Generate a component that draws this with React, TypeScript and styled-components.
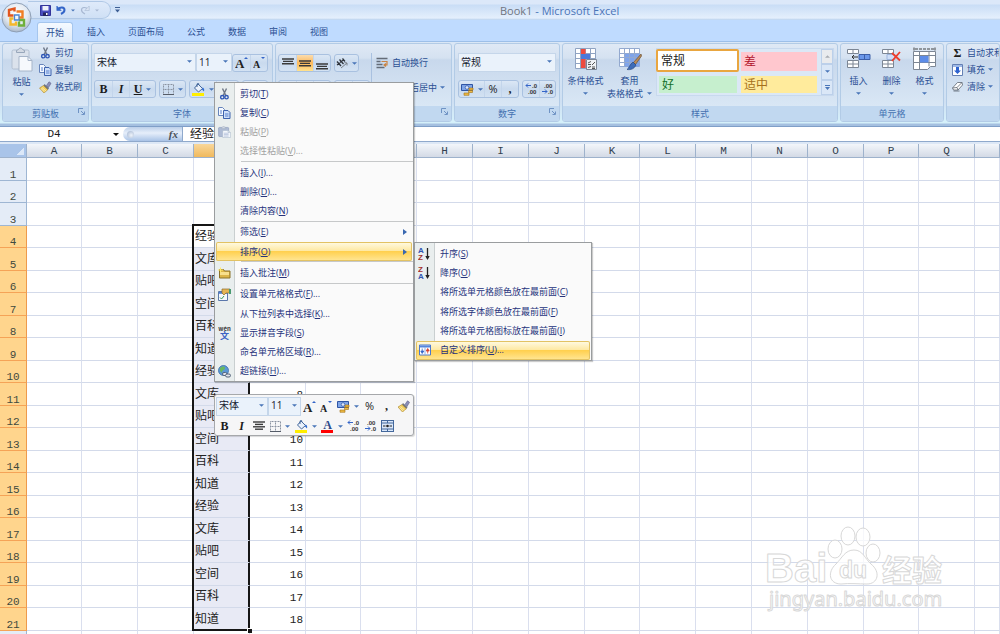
import React from "react";
import styled, { createGlobalStyle, css } from "styled-components";

const UI_FONT = `"Open Sans", "Noto Sans CJK SC", sans-serif`;
const CELL_FONT = `"Liberation Mono", "Noto Sans CJK SC", monospace`;
const INK = "#2b4f93";

const GlobalStyle = createGlobalStyle`
  *, *::before, *::after { box-sizing: border-box; }
  body { margin: 0; overflow: hidden; background: #fff; }
  button, input, select { font: inherit; color: inherit; margin: 0; padding: 0; border: 0; background: none; border-radius: 0; outline: none; }
  button { cursor: pointer; }
  svg { display: block; flex: none; }
`;

const Window = styled.div`
  position: relative;
  display: flex;
  flex-direction: column;
  height: 100vh;
  overflow: hidden;
  font: 9px/12px ${UI_FONT};
  color: ${INK};
`;

/* ---------- Title bar and tabs ---------- */

const TitleBar = styled.header`
  display: flex;
  align-items: center;
  height: 20px;
  padding-left: 28px;
  background: linear-gradient(#dce8f9 0, #dce8f9 4px, #c9ddf6 5px, #e4effc 18px, #b9d2ee 20px);
`;

const QuickAccess = styled.div`
  display: flex;
  align-items: center;
  gap: 5px;
  width: 83px;
  height: 18px;
  padding-left: 12px;
  border: 1px solid #b0c8e6;
  border-left: 0;
  border-radius: 0 9px 9px 0;
  background: linear-gradient(#dfeafa, #cfe0f5);
`;

const QuickMore = styled.button`
  display: flex;
  margin-left: 4px;
`;

const WindowTitle = styled.h1`
  flex: 1;
  margin: 0;
  padding: 2px 0 0 380px;
  font-size: 11px;
  font-weight: 400;
  line-height: 14px;
  color: #4a74b8;
  white-space: nowrap;

  span { color: #70757f; }
`;

const OfficeButton = styled.button`
  position: absolute;
  left: 1px;
  top: 2px;
  width: 31px;
  height: 31px;
`;

const TabStrip = styled.nav`
  display: flex;
  gap: 5px;
  height: 22px;
  padding: 2px 0 0 37px;
  background: #bfdbff;
  border-bottom: 1px solid #9dbfe8;
`;

const Tab = styled.button<{ $active?: boolean }>`
  height: 20px;
  padding: 0 9px;
  white-space: nowrap;
  ${(p) =>
    p.$active &&
    css`
      border: 1px solid #a5c6ee;
      border-bottom: 0;
      border-radius: 3px 3px 0 0;
      padding: 0 8px;
      background: linear-gradient(#f4f9ff, #e1ecf9);
    `}
`;

/* ---------- Ribbon ---------- */

const Ribbon = styled.section`
  display: flex;
  gap: 2px;
  height: 85px;
  padding: 1px 0 4px 2px;
  background: linear-gradient(#dae7f6, #cfe0f3 60px, #d5f0fa 79px, #d5f0fa 81px, #a5c0e0 82px);
  border-bottom: 1px solid #7f9fc8;
`;

const GroupBox = styled.section<{ $width?: number }>`
  display: flex;
  flex-direction: column;
  flex: ${(p) => (p.$width ? `0 0 ${p.$width}px` : "1 0 54px")};
  overflow: hidden;
  border: 1px solid #b2cbe6;
  border-radius: 3px;
  background: linear-gradient(#dfe9f5, #d5e2f1 14px, #c8d8ec 16px, #d9e7f5 62px);
`;

const GroupBody = styled.div<{ $gap?: number; $pad?: string }>`
  display: flex;
  flex: 1;
  gap: ${(p) => p.$gap ?? 0}px;
  padding: ${(p) => p.$pad ?? "0 2px"};
`;

const GroupLabel = styled.footer`
  position: relative;
  display: flex;
  align-items: center;
  justify-content: center;
  height: 15px;
  background: #c1d8f0;
  color: #4471b0;
`;

const Launcher = styled.button`
  position: absolute;
  right: 3px;
  top: 2px;
`;

const Stack = styled.div<{ $gap?: number }>`
  display: flex;
  flex-direction: column;
  gap: ${(p) => p.$gap ?? 0}px;
`;

const AlignStack = styled(Stack)`
  padding-top: 10px;
`;

const Line = styled.div<{ $gap?: number; $height?: number }>`
  display: flex;
  align-items: center;
  gap: ${(p) => p.$gap ?? 0}px;
  height: ${(p) => p.$height ?? 18}px;
`;

const BigButton = styled.button<{ $width: number }>`
  display: flex;
  flex-direction: column;
  align-items: center;
  width: ${(p) => p.$width}px;
  padding-top: 3px;
  line-height: 13px;
  white-space: nowrap;

  svg:first-child { margin-bottom: 3px; }
`;

const ArrowSlot = styled.span`
  display: flex;
  align-items: center;
  gap: 4px;
  height: 13px;

  && svg { margin: 0; }
`;

const SmallButton = styled.button`
  display: flex;
  align-items: center;
  gap: 3px;
  height: 17px;
  white-space: nowrap;

  > :first-child { width: 13px; }
`;

const ButtonSet = styled.div`
  display: flex;
  height: 18px;
  border: 1px solid #a9c1e0;
  border-radius: 3px;
  background: linear-gradient(#dbe7f5, #c9daee 8px, #d3e2f3);
`;

const ToolButton = styled.button<{ $width?: number; $on?: boolean }>`
  display: flex;
  align-items: center;
  justify-content: center;
  gap: 4px;
  width: ${(p) => p.$width ?? 17}px;
  color: #1c1c1c;
  font-size: 11px;
  background: ${(p) => (p.$on ? "linear-gradient(#fbdcae, #fdb95a 8px, #ffe28f)" : "none")};

  & + & { border-left: 1px solid #c3d5eb; }
`;

const Glyph = styled.span<{ $italic?: boolean; $underline?: boolean }>`
  font-family: "Liberation Serif", serif;
  font-size: 12px;
  font-weight: 700;
  font-style: ${(p) => (p.$italic ? "italic" : "normal")};
  text-decoration: ${(p) => (p.$underline ? "underline" : "none")};
  color: #1c1c1c;
`;

const Rule = styled.span`
  align-self: stretch;
  width: 1px;
  margin: 9px 4px 8px 1px;
  background: #a9c1e0;
`;

const Field = styled.label<{ $width: number; $height?: number }>`
  display: flex;
  align-items: center;
  width: ${(p) => p.$width}px;
  height: ${(p) => p.$height ?? 19}px;
  padding: 0 3px 2px 2px;
  border: 1px solid #c5d6ea;
  background: #eaf2fb;
  color: #16202e;
  font-size: 10px;

  select { flex: 1; min-width: 0; appearance: none; }
  svg { pointer-events: none; }
`;

const Gallery = styled.div`
  display: grid;
  grid-template-columns: 82px 80px 14px;
  grid-template-rows: 24px 22px;
  margin: 4px 0 0 3px;
  height: 48px;
  border: 1px solid #c8d9ee;
  background: #dbe8f6;
`;

const Swatch = styled.button<{ $bg: string; $fg: string; $picked?: boolean }>`
  margin: ${(p) => (p.$picked ? "0 0 1px -1px" : "3px 2px 2px 2px")};
  padding-left: ${(p) => (p.$picked ? 3 : 3)}px;
  border: ${(p) => (p.$picked ? "2px solid #e9a640" : "0")};
  border-radius: ${(p) => (p.$picked ? 2 : 0)}px;
  background: ${(p) => p.$bg};
  color: ${(p) => p.$fg};
  font-size: 12px;
  line-height: 16px;
  text-align: left;
`;

const GalleryScroll = styled.div`
  display: grid;
  grid-column: 3;
  grid-row: 1 / 3;
  grid-template-rows: repeat(3, 1fr);
  margin-left: 2px;

  button { display: flex; align-items: center; justify-content: center; border: 1px solid #bcd0ea; background: #dae7f7; }
  button:first-child { background: #e9ebee; }
`;

/* ---------- Formula bar ---------- */

const FormulaBar = styled.div`
  display: flex;
  align-items: center;
  height: 15px;
  background: #fff;
  border-bottom: 1px solid #8fa9cc;
  font: 12px/14px ${CELL_FONT};
  color: #1a1a1a;
`;

const NameBox = styled.input`
  width: 108px;
  font-size: 11px;
  text-align: center;
`;

const NameArrow = styled.button`
  display: flex;
  justify-content: center;
  width: 15px;
`;

const FxPill = styled.div`
  display: flex;
  align-items: center;
  justify-content: space-between;
  width: 60px;
  height: 14px;
  padding: 0 4px;
  border-right: 1px solid #8fa9cc;
  border-radius: 7px 0 0 7px;
  background: linear-gradient(#bcd0ea, #e6eefa 6px, #a9c3e6);
`;

const Knob = styled.span`
  width: 7px;
  height: 7px;
  border-radius: 50%;
  background: radial-gradient(circle at 60% 60%, #eef3fa, #9fb2cf);
`;

const FxButton = styled.button`
  font: italic 700 11px/12px "Liberation Serif", serif;
  color: #4a505a;
`;

const FormulaInput = styled.input`
  flex: 1;
  min-width: 0;
  padding: 1px 0 0 7px;
`;

/* ---------- Grid ---------- */

const SheetArea = styled.main`
  flex: 1;
  min-height: 0;
  overflow: hidden;
  padding-top: 2px;
  background: linear-gradient(#dde8f6 2px, #fff 2px);
`;

const Sheet = styled.table`
  width: 100%;
  table-layout: fixed;
  border-collapse: separate;
  border-spacing: 0;
  font: 12px/16px ${CELL_FONT};
  color: #222;
`;

const ColumnHead = styled.th<{ $on?: boolean }>`
  height: 14px;
  padding: 1px 0 0;
  border-right: 1px solid #9eb2cc;
  border-bottom: 1px solid #9eb2cc;
  background: ${(p) => (p.$on ? "linear-gradient(#f9d79a, #f0b95d)" : "linear-gradient(#f3f6fa, #d3dae6)")};
  font-size: 11px;
  font-weight: 400;
  line-height: 12px;
  color: #333f4f;
`;

const Corner = styled.td`
  padding: 0;
  border-right: 1px solid #9eb2cc;
  border-bottom: 1px solid #9eb2cc;
  background: linear-gradient(135deg, transparent 50%, #dce8f8 50%) 16px 4px / 8px 7px no-repeat #a9c4e9;
`;

const SheetRow = styled.tr<{ $tall: boolean }>`
  height: ${(p) => (p.$tall ? 23 : 22)}px;
`;

const RowHead = styled.th<{ $on: boolean }>`
  padding: 0;
  border-right: 1px solid ${(p) => (p.$on ? "#ee9a4c" : "#9eb6d3")};
  border-bottom: 1px solid ${(p) => (p.$on ? "#f5a357" : "#9eb6d3")};
  background: ${(p) => (p.$on ? "#ffd58d" : "#e4ecf7")};
  font-weight: 400;
  font-size: 11px;
  line-height: 10px;
  vertical-align: bottom;
  color: #3f4a3e;
`;

const Cell = styled.td<{ $num?: boolean }>`
  padding: ${(p) => (p.$num ? "2px 2px 0" : "1px 2px 0")};
  border-right: 1px solid #dadfee;
  border-bottom: 1px solid #d3daea;
  text-align: ${(p) => (p.$num ? "right" : "left")};
  font-size: ${(p) => (p.$num ? 11 : 12)}px;
  white-space: nowrap;
`;

const PickedCell = styled(Cell)<{ $first: boolean; $last: boolean }>`
  position: relative;
  padding-left: 1px;
  background: ${(p) => (p.$first ? "#fff" : "#e8eaf5")};
  box-shadow: -2px 0 #161616, inset -1px 0 #161616
    ${(p) => p.$first && ", 0 -2px #161616, -2px -2px #161616"}
    ${(p) => p.$last && ", inset 0 -1px #161616"};
  border-right-color: #161616;
  ${(p) =>
    p.$last &&
    css`
      border-bottom-color: #161616;
      &::after {
        content: "";
        position: absolute;
        right: -3px;
        bottom: -3px;
        width: 5px;
        height: 5px;
        border: solid #fff;
        border-width: 1px 0 0 1px;
        background: #161616;
      }
    `}
`;

/* ---------- Menus ---------- */

const MenuPanel = styled.div<{ $x: number; $y: number; $w: number; $h: number }>`
  position: absolute;
  left: ${(p) => p.$x}px;
  top: ${(p) => p.$y}px;
  width: ${(p) => p.$w}px;
  height: ${(p) => p.$h}px;
  display: flex;
  flex-direction: column;
  padding-top: 1px;
  border: 1px solid #9a9d9f;
  background: linear-gradient(90deg, #e9eeee 19px, #c9cfd0 19px, #c9cfd0 20px, #fafafa 20px);
  box-shadow: 1px 1px 1px rgba(0, 0, 0, 0.2);
`;

const MenuItem = styled.button<{ $hot?: boolean }>`
  display: flex;
  flex: 1;
  align-items: center;
  min-height: 0;
  padding: 0 6px 0 0;
  text-align: left;
  white-space: nowrap;
  color: #26337c;

  &:disabled { color: #a2a2a2; }
  ${(p) =>
    p.$hot &&
    css`
      margin: 0 1px;
      padding-right: 5px;
      border-radius: 2px;
      box-shadow: inset 0 0 0 1px #e2c263;
      background: linear-gradient(#fffbe6, #fee9a4 45%, #ffd04f 50%, #ffe797);
    `}
`;

const MenuIcon = styled.span<{ $hot?: boolean }>`
  display: flex;
  justify-content: center;
  width: ${(p) => (p.$hot ? 17 : 18)}px;
  margin-right: 7px;
`;

const MenuText = styled.span`
  flex: 1;
`;

const MenuRule = styled.hr`
  flex: none;
  height: 2px;
  width: calc(100% - 26px);
  margin: 0 0 0 26px;
  border: 0;
  border-top: 1px solid #c6c8c9;
`;

const MiniBar = styled.div`
  position: absolute;
  left: 214px;
  top: 394px;
  width: 200px;
  height: 42px;
  padding: 1px;
  border: 1px solid #a6a8ab;
  border-radius: 3px;
  background: #f6f6f7;
  box-shadow: 1px 1px 1px rgba(0, 0, 0, 0.15);
`;

const MiniButton = styled(ToolButton)`
  height: 18px;
  & + & { border-left: 0; }
`;

const Watermark = styled.svg`
  position: absolute;
  right: 50px;
  bottom: 16px;
  pointer-events: none;
`;

/* ---------- Icons ---------- */

const Arrow = ({ color = "#4a76b8", size = 5 }: { color?: string; size?: number }) => (
  <svg width={size} height={3} viewBox="0 0 6 3"><path d="M0 0h6L3 3z" fill={color} /></svg>
);

const LauncherIcon = () => (
  <svg width="7" height="7" viewBox="0 0 7 7" fill="none" stroke="#6f93c4">
    <path d="M.5 5V.5H5" /><path d="M3 3l3 3M6.500 3.500v3h-3" />
  </svg>
);

const OfficeIcon = () => (
  <svg width="31" height="31" viewBox="0 0 31 31">
    <defs>
      <radialGradient id="orb" cx=".5" cy=".35" r=".65">
        <stop offset="0" stopColor="#fff" /><stop offset=".6" stopColor="#e3e9f1" /><stop offset="1" stopColor="#a9b8ca" />
      </radialGradient>
    </defs>
    <circle cx="15.500" cy="15.500" r="14.500" fill="url(#orb)" stroke="#8e9fb5" />
    <g fill="none" strokeWidth="2.400">
      <path d="M12.500 13.500H8V8l5.500-1.500v3" stroke="#e2561e" />
      <path d="M15.500 9.500h6v6H18" stroke="#f07d22" />
      <path d="M12.500 16.500H9.500v6h5.500v-3" stroke="#f5b82e" />
      <path d="M18 18h5v5.500h-5v-4" stroke="#6fb03a" />
      <path d="M13.500 13h4.500v5h-4.500z" stroke="#4b86d2" strokeWidth="1.300" />
    </g>
  </svg>
);

const SaveIcon = () => (
  <svg width="11" height="11" viewBox="0 0 11 11">
    <path d="M.5.5h10v10H.5z" fill="#4a4ec0" stroke="#33349a" />
    <path d="M2.500 1h6v4.500h-6z" fill="#eef1fb" /><path d="M3 7.500h5V11H3z" fill="#23255f" /><path d="M6 8h1.500v2H6z" fill="#fff" />
  </svg>
);

const UndoIcon = ({ flip }: { flip?: boolean }) => (
  <svg width="10" height="10" viewBox="0 0 10 10">
    <g transform={flip ? "matrix(-1 0 0 1 10 0)" : undefined} stroke={flip ? "#a8b8d2" : "#3465c8"}>
      <path d="M2 4.500c2-3 6.500-2.500 6.500.5 0 2-1.500 3-3.500 4" fill="none" strokeWidth={flip ? 1.2 : 2} />
      <path d="M.8 1v4.500h4.400z" fill={flip ? "#dbe5f3" : "#3465c8"} strokeWidth=".6" />
    </g>
  </svg>
);

const CutIcon = () => (
  <svg width="11" height="12" viewBox="0 0 11 12" fill="none">
    <path d="M3.500.5l3.300 7M7.500.5L4.200 7.500" stroke="#6d7686" strokeWidth="1.400" />
    <circle cx="3.300" cy="9.200" r="1.700" stroke="#2f57b5" strokeWidth="1.400" /><circle cx="7.500" cy="9.200" r="1.700" stroke="#2f57b5" strokeWidth="1.400" />
  </svg>
);

const CopyIcon = () => (
  <svg width="13" height="12" viewBox="0 0 13 12" stroke="#6684bb">
    <path d="M.5.5h4l2 2v6h-6z" fill="#f5f9ff" /><path d="M5.500 3.500h4.500l2 2v6H5.500z" fill="#cfe0fa" stroke="#3d62ad" />
    <path d="M2 4h2M2 6h2M7 7h3.500M7 9h3.500" stroke="#5880cc" />
  </svg>
);

const BrushIcon = () => (
  <svg width="12" height="12" viewBox="0 0 12 12">
    <path d="M7 4.500L9.500.8l2 1.500L9 6.500z" fill="#8b8fbb" stroke="#5c5f86" strokeWidth=".6" />
    <path d="M5 3l4.500 4.300-1.300 1.800L3.800 5z" fill="#6f7480" />
    <path d="M4 4.500l4.300 4.200L4.500 12 0 7z" fill="#f2cf5c" stroke="#a88431" strokeWidth=".6" />
    <path d="M2.500 6.500l4 3.500M1.500 7.500L5 10.800" stroke="#fff4c8" strokeWidth=".7" />
  </svg>
);

const PasteIcon = ({ small }: { small?: boolean }) => (
  <svg width={small ? 13 : 22} height={small ? 12 : 25} viewBox="0 0 22 25" preserveAspectRatio="none">
    <rect x="1" y="3" width="17" height="19" rx="1.500" fill={small ? "#aebbd4" : "#dbe2ec"} stroke={small ? "#8395b8" : "#b3c0d1"} />
    <path d="M5.500 3.500c2 0 2-2.500 4-2.500s2 2.500 4 2.500v2h-8z" fill="#d3dae4" stroke="#98a7bb" />
    <path d="M8 9.500h9l4 4V24H8z" fill="#f6f9fd" stroke="#a6b5c9" /><path d="M17 9.500v4h4" fill="none" stroke="#a6b5c9" />
    {small && <path d="M10 15h8M10 18h8M10 21h8" stroke="#8ca0c7" />}
  </svg>
);

const BordersIcon = () => (
  <svg width="11" height="11" viewBox="0 0 11 11" fill="none" stroke="#8a93a1">
    <path d="M.5.5h10v10H.5zM5.500.5v10M.5 5.500h10" strokeDasharray="1 .5" /><path d="M0 10.500h11" stroke="#555c68" />
  </svg>
);

const BucketIcon = () => (
  <svg width="13" height="13" viewBox="0 0 13 13">
    <path d="M6 1l4.500 4.500-4 3.500-4-4z" fill="#eaf1fb" stroke="#44689c" /><path d="M5 4V1.500c0-1.500 2-1.500 2 0" fill="none" stroke="#44689c" />
    <path d="M10.500 4.500c1.500.5 2 2 1.500 4l-2-2z" fill="#2f6bd0" /><path d="M0 10h12v3H0z" fill="#ffee00" />
  </svg>
);

const BarsIcon = ({ top = 1, widths = [12, 10, 12] }: { top?: number; widths?: number[] }) => (
  <svg width="12" height="13" viewBox="0 0 12 13" stroke="#3a3a3a" strokeWidth="1.400">
    {widths.map((w, i) => <path key={i} d={`M${6 - w / 2} ${top + 1 + i * 2.4}h${w}`} />)}
  </svg>
);

const OrientIcon = () => (
  <svg width="12" height="12" viewBox="0 0 12 12" fill="none" stroke="#2f343c">
    <path d="M1 4.500l4 4.500M3.500 2.500l4 4.500M1 8l3-2M4 5.500l3.500-2.500M6.500 1.500l2.500 3" strokeWidth="1.300" /><path d="M5 11L11 6M8.500 5.500L11 6v2.500" stroke="#7a8089" />
  </svg>
);

const WrapIcon = () => (
  <svg width="12" height="12" viewBox="0 0 12 12" fill="none">
    <path d="M0 1.500h11M0 4.500h4M0 7.500h6M0 10.500h8" stroke="#646c78" strokeWidth="1.300" />
    <path d="M5 4.500h5.500v3.500H8M9.500 6.500L7.500 8l2 1.500" stroke="#c98445" strokeWidth="1.200" />
  </svg>
);

const MergeIcon = () => (
  <svg width="13" height="12" viewBox="0 0 13 12" fill="none" stroke="#44689c">
    <rect x=".5" y=".5" width="12" height="11" fill="#dbe8fa" /><path d="M.5 3h12M.5 9h12M6.500.5V3M6.500 9v2.500" />
    <path d="M2 6h2.500M11 6H8.500" stroke="#222" /><circle cx="6.500" cy="6" r="1.300" fill="#222" stroke="none" />
  </svg>
);

const MoneyIcon = () => (
  <svg width="13" height="13" viewBox="0 0 13 13">
    <path d="M.5 1.500h11v6H.5z" fill="#7ea4e6" stroke="#2f55a5" /><circle cx="6" cy="4.500" r="1.800" fill="#dce8fb" stroke="#2f55a5" strokeWidth=".7" />
    <path d="M8 5h4v2H8zM7.500 7.500h4v2h-4zM3 10h5v2.300H3z" fill="#f0bb42" stroke="#a0701a" strokeWidth=".6" />
  </svg>
);

const DecimalIcon = ({ more }: { more?: boolean }) => (
  <svg width="13" height="12" viewBox="0 0 13 12" fill="#333" fontFamily="Liberation Sans" fontWeight="700" fontSize="6">
    <text x={more ? 7 : 3} y="5">{more ? ".0" : ".00"}</text><text x={more ? 3 : 7} y="11">{more ? ".00" : ".0"}</text>
    <path d={more ? "M1 2.500h5M3 .5L1 2.500l2 2" : "M1 8.500h5M4 6.500l2 2-2 2"} fill="none" stroke="#3465c8" />
  </svg>
);

const CondIcon = () => (
  <svg width="24" height="24" viewBox="0 0 24 24" stroke="#8fa3c2">
    <path d="M1.500 1.500h20v20h-20z" fill="#fff" /><path d="M1.500 6.500h20M1.500 11.500h20M1.500 16.500h20M6.500 1.500v20M11.500 1.500v20M16.500 1.500v20" />
    <path d="M7 2h4.500v5H7zM7 12h4.500v9H7z" fill="#ee4b3e" stroke="none" /><path d="M7 7h9v5H7z" fill="#4b79d8" stroke="none" />
    <path d="M12.500 12.500h10v10h-10z" fill="#eef1f5" stroke="#7b8696" /><path d="M14 16l3-1.500M14 17.500h3M18 18l3-3M14 20.500l3-1M18 20h3M18 21.500h3" stroke="#555" fill="none" />
  </svg>
);

const TableStyleIcon = () => (
  <svg width="24" height="24" viewBox="0 0 24 24" stroke="#93a9cf">
    <path d="M1.500 1.500h20v18h-20z" fill="#fff" /><path d="M6.500 6.500h15v13h-15z" fill="#7fa4ea" stroke="none" />
    <path d="M1.500 6.500h20M1.500 10.500h20M1.500 15.500h20M6.500 1.500v18M11.500 1.500v18M16.500 1.500v18" fill="none" />
    <path d="M23 7l-7.500 8.500 2 2L23.500 9z" fill="#b98a57" stroke="#6f5132" strokeWidth=".7" />
    <path d="M15 15l3 3c-2 4-5 5-9 4.500 2-1 2.500-5 6-7.500z" fill="#3e6cb8" stroke="#29497e" strokeWidth=".7" />
  </svg>
);

const InsertIcon = () => (
  <svg width="25" height="24" viewBox="0 0 25 24" fill="#fff" stroke="#7c8694">
    <path d="M1.500 2.500h11v4h-11zM7 2.500v4M1.500 13.500h11v7h-11zM7 13.500v7M1.500 17h11" />
    <path d="M13 7.500h11v5H13z" fill="#6a97ea" stroke="#3d5fa8" /><path d="M18.500 7.500v5" stroke="#3d5fa8" /><path d="M12 10H6M8 8l-2 2 2 2" stroke="#333" fill="none" />
  </svg>
);

const DeleteIcon = () => (
  <svg width="21" height="24" viewBox="0 0 21 24" fill="#fff" stroke="#7c8694">
    <path d="M1.500 2.500h11v4h-11zM7 2.500v4M1.500 13.500h11v7h-11zM7 13.500v7M1.500 17h11" />
    <path d="M6 7.500h8v5H6z" fill="#cfdff8" stroke="#9db5dc" /><path d="M11 6l8 7.500M19 5l-8 9" stroke="#ee3e2c" strokeWidth="1.800" />
  </svg>
);

const FormatIcon = () => (
  <svg width="25" height="24" viewBox="0 0 25 24" fill="#fff" stroke="#7c8694">
    <path d="M2 .5v3M23 .5v3M3 2h19" stroke="#444" strokeDasharray="3 1" /><path d="M1.500 4.500h22v15h-5l-3 3h-14z" />
    <path d="M1.500 8.500h22M1.500 15.500h22M7.500 4.500v18M17 4.500v15" fill="none" /><path d="M8 9h8.500v6.500H8z" fill="#5c8ce8" stroke="none" />
  </svg>
);

const FillIcon = () => (
  <svg width="11" height="12" viewBox="0 0 11 12">
    <path d="M.5.5h10v11H.5z" fill="#fff" stroke="#6480b4" /><path d="M1 1h9v2H1z" fill="#9fb9e6" />
    <path d="M4 3h3v3.500h2L5.500 10 2 6.500h2z" fill="#2d62cf" />
  </svg>
);

const EraserIcon = () => (
  <svg width="12" height="11" viewBox="0 0 12 11" stroke="#5c6470" strokeWidth=".8">
    <path d="M1 7l5-5.500h4.500L11 4 6.500 9H2z" fill="#fff" /><path d="M1 7l4.500-.5L10.500 1.500M5.500 6.500l1 2.500" fill="none" /><path d="M2 10h6" />
  </svg>
);

const CommentIcon = () => (
  <svg width="13" height="12" viewBox="0 0 13 12">
    <path d="M1.500 2.500h4l1 1.500h5.500v7H1.500z" fill="#dcb548" stroke="#8c7228" /><path d="M2 5h9v3H2z" fill="#f8e08c" /><path d="M0 3h5M2.500.5v5" stroke="#ffe96b" />
  </svg>
);

const FormatCellsIcon = () => (
  <svg width="13" height="13" viewBox="0 0 13 13">
    <path d="M.5 3.500h9v9h-9z" fill="#f5f8fd" stroke="#5a77ab" /><path d="M1 4h8v1.800H1z" fill="#4f7fd4" />
    <path d="M4 1h8v4H8L6 7 4 5z" fill="#e5b556" stroke="#8e6a2a" strokeWidth=".7" /><path d="M2 9.500l1.500 1.500L6 8" fill="none" stroke="#3a9a56" />
    <path d="M11 1h2v5h-2z" fill="#4a9a70" />
  </svg>
);

const PinyinIcon = () => (
  <svg width="13" height="14" viewBox="0 0 13 14" fontFamily="Noto Sans CJK SC">
    <text x="6.500" y="5" textAnchor="middle" fontSize="6" fontWeight="700" fill="#3a3a3a">wén</text>
    <text x="6.500" y="13" textAnchor="middle" fontSize="9" fontWeight="700" fill="#3b62c4">文</text>
  </svg>
);

const LinkIcon = () => (
  <svg width="13" height="13" viewBox="0 0 13 13">
    <circle cx="5.500" cy="5.500" r="5" fill="#5a98d6" stroke="#3a6da8" strokeWidth=".8" /><path d="M2 3c2-2 5-2 5 0S4 5 4 7 1 5 2 3z" fill="#68b85f" />
    <g fill="#dfe4ec" stroke="#56657c"><rect x="4.500" y="7.500" width="4.500" height="3" rx="1.500" /><rect x="7.500" y="9" width="5" height="3" rx="1.500" /></g>
  </svg>
);

const SortIcon = ({ down }: { down?: boolean }) => (
  <svg width="13" height="14" viewBox="0 0 13 14" fontFamily="Liberation Sans" fontSize="8" fontWeight="700">
    <text x="0" y="6" fill={down ? "#a3302b" : "#2f55b0"}>{down ? "Z" : "A"}</text>
    <text x="0" y="13" fill={down ? "#2f55b0" : "#a3302b"}>{down ? "A" : "Z"}</text>
    <path d="M9.500 1v9" stroke="#222" strokeWidth="1.300" /><path d="M7.300 9h4.400l-2.200 4z" fill="#222" />
  </svg>
);

const CustomSortIcon = () => (
  <svg width="12" height="12" viewBox="0 0 12 12">
    <path d="M.5 1h11v10H.5z" fill="#fff" stroke="#4a78cf" /><path d="M1 1.500h10v2H1z" fill="#5586dd" /><path d="M6 3v8" stroke="#8fb0e6" />
    <path d="M3.200 4.500v3M1.800 7h3L3.200 9.500z" fill="#3465c8" stroke="#3465c8" strokeWidth=".8" /><path d="M8.700 9.500v-3M7.200 7h3L8.700 4.500z" fill="#d8402f" stroke="#d8402f" strokeWidth=".8" />
  </svg>
);

const Chevron = () => <svg width="4" height="6" viewBox="0 0 4 6"><path d="M0 0l4 3-4 3z" fill="#3a68b0" /></svg>;

const GrowFont = ({ shrink }: { shrink?: boolean }) => (
  <svg width="13" height="13" viewBox="0 0 13 13" fontFamily="Liberation Serif" fontWeight="700">
    <text x="0" y="12" fontSize={shrink ? 10 : 13} fill="#222">A</text>
    <path d={shrink ? "M8 1h4l-2 2z" : "M9 3h4L11 1z"} fill="#3465c8" />
  </svg>
);

const FontColorIcon = () => (
  <svg width="13" height="14" viewBox="0 0 13 14" fontFamily="Liberation Serif" fontWeight="700">
    <text x="6.500" y="10" textAnchor="middle" fontSize="12" fill="#2d4a8a">A</text><path d="M0 11h12v3H0z" fill="#f00" />
  </svg>
);

/* ---------- Composite pieces ---------- */

const Group = ({ width, label, launcher, gap, pad, children }: {
  width?: number; label: string; launcher?: boolean; gap?: number; pad?: string; children: React.ReactNode;
}) => (
  <GroupBox $width={width} aria-label={label || "编辑"}>
    <GroupBody $gap={gap} $pad={pad}>{children}</GroupBody>
    <GroupLabel>
      {label}
      {launcher && <Launcher aria-label={`${label}选项`}><LauncherIcon /></Launcher>}
    </GroupLabel>
  </GroupBox>
);

const Select = ({ width, height, label, value }: { width: number; height?: number; label: string; value: string }) => (
  <Field $width={width} $height={height}>
    <select aria-label={label} defaultValue={value}><option>{value}</option></select>
    <Arrow />
  </Field>
);

type Entry = { text: string; key: string; dots?: boolean; icon?: React.ReactNode; off?: boolean; hot?: boolean; sub?: boolean } | "rule";

const Menu = ({ x, y, w, h, entries, label }: { x: number; y: number; w: number; h: number; entries: Entry[]; label: string }) => (
  <MenuPanel $x={x} $y={y} $w={w} $h={h} role="menu" aria-label={label}>
    {entries.map((e, i) =>
      e === "rule" ? <MenuRule key={i} /> : (
        <MenuItem key={i} role="menuitem" $hot={e.hot} disabled={e.off}>
          <MenuIcon $hot={e.hot}>{e.icon}</MenuIcon>
          <MenuText>{e.text}(<u>{e.key}</u>){e.dots && "..."}</MenuText>
          {e.sub && <Chevron />}
        </MenuItem>
      )
    )}
  </MenuPanel>
);

const contextEntries: Entry[] = [
  { text: "剪切", key: "T", icon: <CutIcon /> },
  { text: "复制", key: "C", icon: <CopyIcon /> },
  { text: "粘贴", key: "P", icon: <PasteIcon small />, off: true },
  { text: "选择性粘贴", key: "V", dots: true, off: true },
  "rule",
  { text: "插入", key: "I", dots: true },
  { text: "删除", key: "D", dots: true },
  { text: "清除内容", key: "N" },
  "rule",
  { text: "筛选", key: "E", sub: true },
  { text: "排序", key: "O", sub: true, hot: true },
  "rule",
  { text: "插入批注", key: "M", icon: <CommentIcon /> },
  "rule",
  { text: "设置单元格格式", key: "F", dots: true, icon: <FormatCellsIcon /> },
  { text: "从下拉列表中选择", key: "K", dots: true },
  { text: "显示拼音字段", key: "S", icon: <PinyinIcon /> },
  { text: "命名单元格区域", key: "R", dots: true },
  { text: "超链接", key: "H", dots: true, icon: <LinkIcon /> },
];

const sortEntries: Entry[] = [
  { text: "升序", key: "S", icon: <SortIcon /> },
  { text: "降序", key: "O", icon: <SortIcon down /> },
  { text: "将所选单元格颜色放在最前面", key: "C" },
  { text: "将所选字体颜色放在最前面", key: "F" },
  { text: "将所选单元格图标放在最前面", key: "I" },
  { text: "自定义排序", key: "U", dots: true, icon: <CustomSortIcon />, hot: true },
];

const tabs = ["开始", "插入", "页面布局", "公式", "数据", "审阅", "视图"];
const names = ["经验", "文库", "贴吧", "空间", "百科", "知道"];
const columns = "ABCDEFGHIJKLMNOPQR".split("");
const rows = Array.from({ length: 22 }, (_, i) => i + 1);
const isPicked = (row: number) => row >= 4 && row <= 21;

const Worksheet = () => (
  <Sheet>
    <colgroup>
      <col style={{ width: 27 }} />
      {columns.slice(0, -1).map((c, i) => <col key={c} style={{ width: i % 5 === 0 ? 55 : 56 }} />)}
      <col />
    </colgroup>
    <thead>
      <tr>
        <Corner />
        {columns.map((c) => <ColumnHead key={c} scope="col" $on={c === "D"}>{c === "R" ? "" : c}</ColumnHead>)}
      </tr>
    </thead>
    <tbody>
      {rows.map((r) => (
        <SheetRow key={r} $tall={r % 2 === 1}>
          <RowHead scope="row" $on={isPicked(r)}>{r <= 21 ? r : ""}</RowHead>
          {columns.map((c) =>
            c === "D" && isPicked(r) ? (
              <PickedCell key={c} $first={r === 4} $last={r === 21}>{names[(r - 4) % 6]}</PickedCell>
            ) : (
              <Cell key={c} $num={c === "E"}>{c === "E" && isPicked(r) ? r - 3 : null}</Cell>
            )
          )}
        </SheetRow>
      ))}
    </tbody>
  </Sheet>
);

const AlignTools = () => (
  <>
    <AlignStack $gap={8}>
      <Line $gap={3}>
        <ButtonSet>
          <ToolButton aria-label="顶端对齐"><BarsIcon top={1} /></ToolButton>
          <ToolButton $on aria-label="垂直居中"><BarsIcon top={3} /></ToolButton>
          <ToolButton aria-label="底端对齐"><BarsIcon top={6} /></ToolButton>
        </ButtonSet>
        <ButtonSet><ToolButton $width={23} aria-label="方向"><OrientIcon /><Arrow /></ToolButton></ButtonSet>
      </Line>
      <Line $gap={3}>
        <ButtonSet>
          <ToolButton aria-label="左对齐"><BarsIcon /></ToolButton>
          <ToolButton aria-label="居中"><BarsIcon /></ToolButton>
          <ToolButton aria-label="右对齐"><BarsIcon /></ToolButton>
        </ButtonSet>
        <ButtonSet>
          <ToolButton aria-label="减少缩进"><WrapIcon /></ToolButton>
          <ToolButton aria-label="增加缩进"><WrapIcon /></ToolButton>
        </ButtonSet>
      </Line>
    </AlignStack>
    <Rule />
    <AlignStack $gap={8}>
      <SmallButton><WrapIcon />自动换行</SmallButton>
      <SmallButton><MergeIcon />合并后居中<Arrow /></SmallButton>
    </AlignStack>
  </>
);

const MiniToolbar = () => (
  <MiniBar role="toolbar" aria-label="浮动工具栏">
    <Line $height={20}>
      <Select width={52} height={19} label="字体" value="宋体" />
      <Select width={33} height={19} label="字号" value="11" />
      <MiniButton aria-label="增大字号"><GrowFont /></MiniButton>
      <MiniButton aria-label="减小字号"><GrowFont shrink /></MiniButton>
      <MiniButton $width={26} aria-label="会计数字格式"><MoneyIcon /><Arrow /></MiniButton>
      <MiniButton aria-label="百分比">%</MiniButton>
      <MiniButton aria-label="千位分隔"><Glyph>,</Glyph></MiniButton>
      <MiniButton aria-label="格式刷"><BrushIcon /></MiniButton>
    </Line>
    <Line $height={20}>
      <MiniButton aria-label="加粗"><Glyph>B</Glyph></MiniButton>
      <MiniButton aria-label="倾斜"><Glyph $italic>I</Glyph></MiniButton>
      <MiniButton aria-label="居中"><BarsIcon widths={[12, 8, 12, 8]} /></MiniButton>
      <MiniButton $width={26} aria-label="边框"><BordersIcon /><Arrow /></MiniButton>
      <MiniButton $width={26} aria-label="填充颜色"><BucketIcon /><Arrow /></MiniButton>
      <MiniButton $width={26} aria-label="字体颜色"><FontColorIcon /><Arrow /></MiniButton>
      <MiniButton aria-label="增加小数位数"><DecimalIcon more /></MiniButton>
      <MiniButton aria-label="减少小数位数"><DecimalIcon /></MiniButton>
      <MiniButton aria-label="合并"><MergeIcon /></MiniButton>
    </Line>
  </MiniBar>
);

export default function App() {
  return (
    <Window>
      <GlobalStyle />
      <TitleBar>
        <QuickAccess>
          <SaveIcon />
          <UndoIcon />
          <Arrow size={4} />
          <UndoIcon flip />
          <Arrow size={4} color="#a8b8d2" />
        </QuickAccess>
        <QuickMore aria-label="自定义快速访问工具栏">
          <svg width="5" height="6" viewBox="0 0 5 6" fill="#3e5f94"><path d="M0 0h5v1H0zM0 2.500h5L2.500 5.500z" /></svg>
        </QuickMore>
        <WindowTitle><span>Book1</span> - Microsoft Excel</WindowTitle>
      </TitleBar>
      <TabStrip role="tablist">
        {tabs.map((t, i) => <Tab key={t} role="tab" aria-selected={i === 0} $active={i === 0}>{t}</Tab>)}
      </TabStrip>
      <OfficeButton aria-label="Office"><OfficeIcon /></OfficeButton>

      <Ribbon>
        <Group width={87} label="剪贴板" launcher gap={2} pad="0 2px 0 3px">
          <BigButton $width={31}><PasteIcon />粘贴<ArrowSlot><Arrow /></ArrowSlot></BigButton>
          <Stack>
            <SmallButton><CutIcon />剪切</SmallButton>
            <SmallButton><CopyIcon />复制</SmallButton>
            <SmallButton><BrushIcon />格式刷</SmallButton>
          </Stack>
        </Group>

        <Group width={182} label="字体" pad="9px 2px 0">
          <Stack $gap={8}>
            <Line $height={19}>
              <Select width={102} label="字体" value="宋体" />
              <Select width={36} label="字号" value="11" />
              <ButtonSet>
                <ToolButton aria-label="增大字号"><GrowFont /></ToolButton>
                <ToolButton aria-label="减小字号"><GrowFont shrink /></ToolButton>
              </ButtonSet>
            </Line>
            <Line $gap={3}>
              <ButtonSet>
                <ToolButton aria-label="加粗"><Glyph>B</Glyph></ToolButton>
                <ToolButton aria-label="倾斜"><Glyph $italic>I</Glyph></ToolButton>
                <ToolButton $width={26} aria-label="下划线"><Glyph $underline>U</Glyph><Arrow /></ToolButton>
              </ButtonSet>
              <ButtonSet><ToolButton $width={25} aria-label="边框"><BordersIcon /><Arrow /></ToolButton></ButtonSet>
              <ButtonSet>
                <ToolButton $width={26} aria-label="填充颜色"><BucketIcon /><Arrow /></ToolButton>
                <ToolButton $width={22} aria-label="字体颜色"><Arrow /></ToolButton>
              </ButtonSet>
              <ButtonSet><ToolButton $width={24} aria-label="拼音"><Arrow /></ToolButton></ButtonSet>
            </Line>
          </Stack>
        </Group>

        <Group width={177} label="对齐方式" launcher pad="0 2px">
          <AlignTools />
        </Group>

        <Group width={106} label="数字" launcher pad="9px 3px 0">
          <Stack $gap={8}>
            <Select width={98} label="数字格式" value="常规" />
            <Line $gap={3}>
              <ButtonSet>
                <ToolButton $width={25} aria-label="会计数字格式"><MoneyIcon /><Arrow /></ToolButton>
                <ToolButton aria-label="百分比">%</ToolButton>
                <ToolButton aria-label="千位分隔"><Glyph>,</Glyph></ToolButton>
              </ButtonSet>
              <ButtonSet>
                <ToolButton $width={16} aria-label="增加小数位数"><DecimalIcon more /></ToolButton>
                <ToolButton $width={16} aria-label="减少小数位数"><DecimalIcon /></ToolButton>
              </ButtonSet>
            </Line>
          </Stack>
        </Group>

        <Group width={276} label="样式" pad="0 2px">
          <BigButton $width={41}><CondIcon />条件格式<ArrowSlot><Arrow /></ArrowSlot></BigButton>
          <BigButton $width={47}><TableStyleIcon />套用<ArrowSlot>表格格式<Arrow /></ArrowSlot></BigButton>
          <Gallery>
            <Swatch $picked $bg="#fff" $fg="#222">常规</Swatch>
            <Swatch $bg="#ffc7ce" $fg="#b0122b">差</Swatch>
            <GalleryScroll>
              <button aria-label="上一行"><svg width="5" height="3" viewBox="0 0 6 3"><path d="M0 3h6L3 0z" fill="#a9adb3" /></svg></button>
              <button aria-label="下一行"><Arrow /></button>
              <button aria-label="其他"><svg width="5" height="5" viewBox="0 0 5 5" fill="#4a76b8"><path d="M0 0h5v1H0zM0 2h5L2.500 5z" /></svg></button>
            </GalleryScroll>
            <Swatch $bg="#c6efce" $fg="#12702a">好</Swatch>
            <Swatch $bg="#ffeb9c" $fg="#a5701a">适中</Swatch>
          </Gallery>
        </Group>

        <Group width={104} label="单元格" pad="0 1px">
          <BigButton $width={33}><InsertIcon />插入<ArrowSlot><Arrow /></ArrowSlot></BigButton>
          <BigButton $width={33}><DeleteIcon />删除<ArrowSlot><Arrow /></ArrowSlot></BigButton>
          <BigButton $width={33}><FormatIcon />格式<ArrowSlot><Arrow /></ArrowSlot></BigButton>
        </Group>

        <Group label="" pad="0 0 0 4px">
          <Stack>
            <SmallButton><Glyph>Σ</Glyph>自动求和</SmallButton>
            <SmallButton><FillIcon />填充<Arrow /></SmallButton>
            <SmallButton><EraserIcon />清除<Arrow /></SmallButton>
          </Stack>
        </Group>
      </Ribbon>

      <FormulaBar>
        <NameBox aria-label="名称框" defaultValue="D4" />
        <NameArrow aria-label="名称列表"><Arrow color="#111" size={6} /></NameArrow>
        <FxPill><Knob /><FxButton aria-label="插入函数">fx</FxButton></FxPill>
        <FormulaInput aria-label="编辑栏" defaultValue="经验" />
      </FormulaBar>

      <SheetArea>
        <Worksheet />
      </SheetArea>

      <Menu x={214} y={82} w={200} h={300} entries={contextEntries} label="单元格菜单" />
      <Menu x={414} y={242} w={178} h={119} entries={sortEntries} label="排序" />
      <MiniToolbar />

      <Watermark width="190" height="94" viewBox="0 0 190 94" fill="#fff" fillOpacity=".75" stroke="#d8d8d8" strokeLinejoin="round">
        <g>
          <ellipse cx="75" cy="25" rx="7" ry="9" />
          <ellipse cx="88" cy="12" rx="7" ry="9" />
          <ellipse cx="103" cy="13" rx="7" ry="9" />
          <ellipse cx="113" cy="29" rx="7" ry="9" />
          <path d="M94 26c9 0 11 9 17 14 10 8 7 20-4 20-8 0-18-1-26 0-12 0-14-12-5-20 6-6 9-14 18-14z" />
        </g>
        <g fontFamily="Liberation Sans" fontWeight="700">
          <text x="5" y="58" fontSize="40">Bai</text>
          <text x="79" y="54" fontSize="23">du</text>
        </g>
        <text x="122" y="57" fontFamily="Noto Sans CJK SC" fontWeight="700" fontSize="30">经验</text>
        <text x="9" y="82" fontFamily="Noto Sans" fontSize="20">jingyan.baidu.com</text>
      </Watermark>
    </Window>
  );
}
